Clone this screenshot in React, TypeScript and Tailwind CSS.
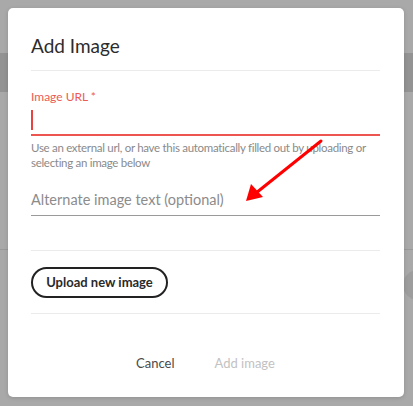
export default function App() {
  return (
    <div className="relative w-[413px] h-[406px] overflow-hidden bg-[#a9a9a9] font-['Lato','Liberation_Sans',sans-serif]">
      {/* dimmed page behind the dialog */}
      <div className="flex flex-col h-full">
        <div className="h-[53px]" />
        <div className="h-[39px] bg-[#939393]" />
        <div className="h-[157px]" />
        <div className="h-px bg-[#999999]" />
        <div className="flex justify-end pt-[20px]">
          <div className="w-[30px] h-[30px] rounded-full bg-[#9d9d9d] -mr-[20px]" />
        </div>
      </div>

      {/* dialog */}
      <div className="absolute left-[8px] top-[8px] w-[396px] h-[389px] rounded-[5px] bg-white shadow-[0_1px_4px_rgba(0,0,0,0.15)] flex flex-col pl-[23px] pr-[24px]">
        <h1 className="pt-[26px] text-[19px] leading-[24px] text-[#2c2c2c]">Add Image</h1>
        <div className="mt-[12px] h-px bg-[#ebebeb]" />

        <label className="mt-[18px] text-[12px] leading-[16px] text-[#ec5a55]">Image URL *</label>
        <div className="h-[31px] border-b-2 border-[#ec5550] flex items-center">
          <div className="w-[2px] h-[20px] bg-[#e8433e]" />
        </div>
        <p className="mt-[4px] text-[11.5px] leading-[15px] tracking-[-0.3px] text-[#8a8a8a]">
          Use an external url, or have this automatically filled out by uploading or selecting an image below
        </p>

        <div className="mt-[15px] h-[31px] border-b border-[#9a9a9a] flex items-center text-[14.5px] text-[#8c8c8c]">
          Alternate image text (optional)
        </div>

        <div className="mt-[34px] h-px bg-[#ebebeb]" />

        <div className="mt-[16px] flex">
          <button className="h-[31px] w-[137px] rounded-full border-2 border-[#222222] text-[13px] font-bold text-[#2a2a2a]">
            Upload new image
          </button>
        </div>

        <div className="mt-[15px] h-px bg-[#ebebeb]" />

        <div className="flex-1 flex items-start justify-center gap-[40px] pt-[39px] text-[13px] leading-[20px]">
          <span className="text-[#4a4a4a]">Cancel</span>
          <span className="text-[#c2c2c2]">Add image</span>
        </div>
      </div>

      {/* red annotation arrow */}
      <svg className="absolute left-0 top-0" width="413" height="406" viewBox="0 0 413 406">
        <line x1="321" y1="141" x2="256" y2="193" stroke="#ff0000" strokeWidth="3" strokeLinecap="round" />
        <polygon points="246,201 251,184 263,197" fill="#ff0000" />
      </svg>
    </div>
  );
}
